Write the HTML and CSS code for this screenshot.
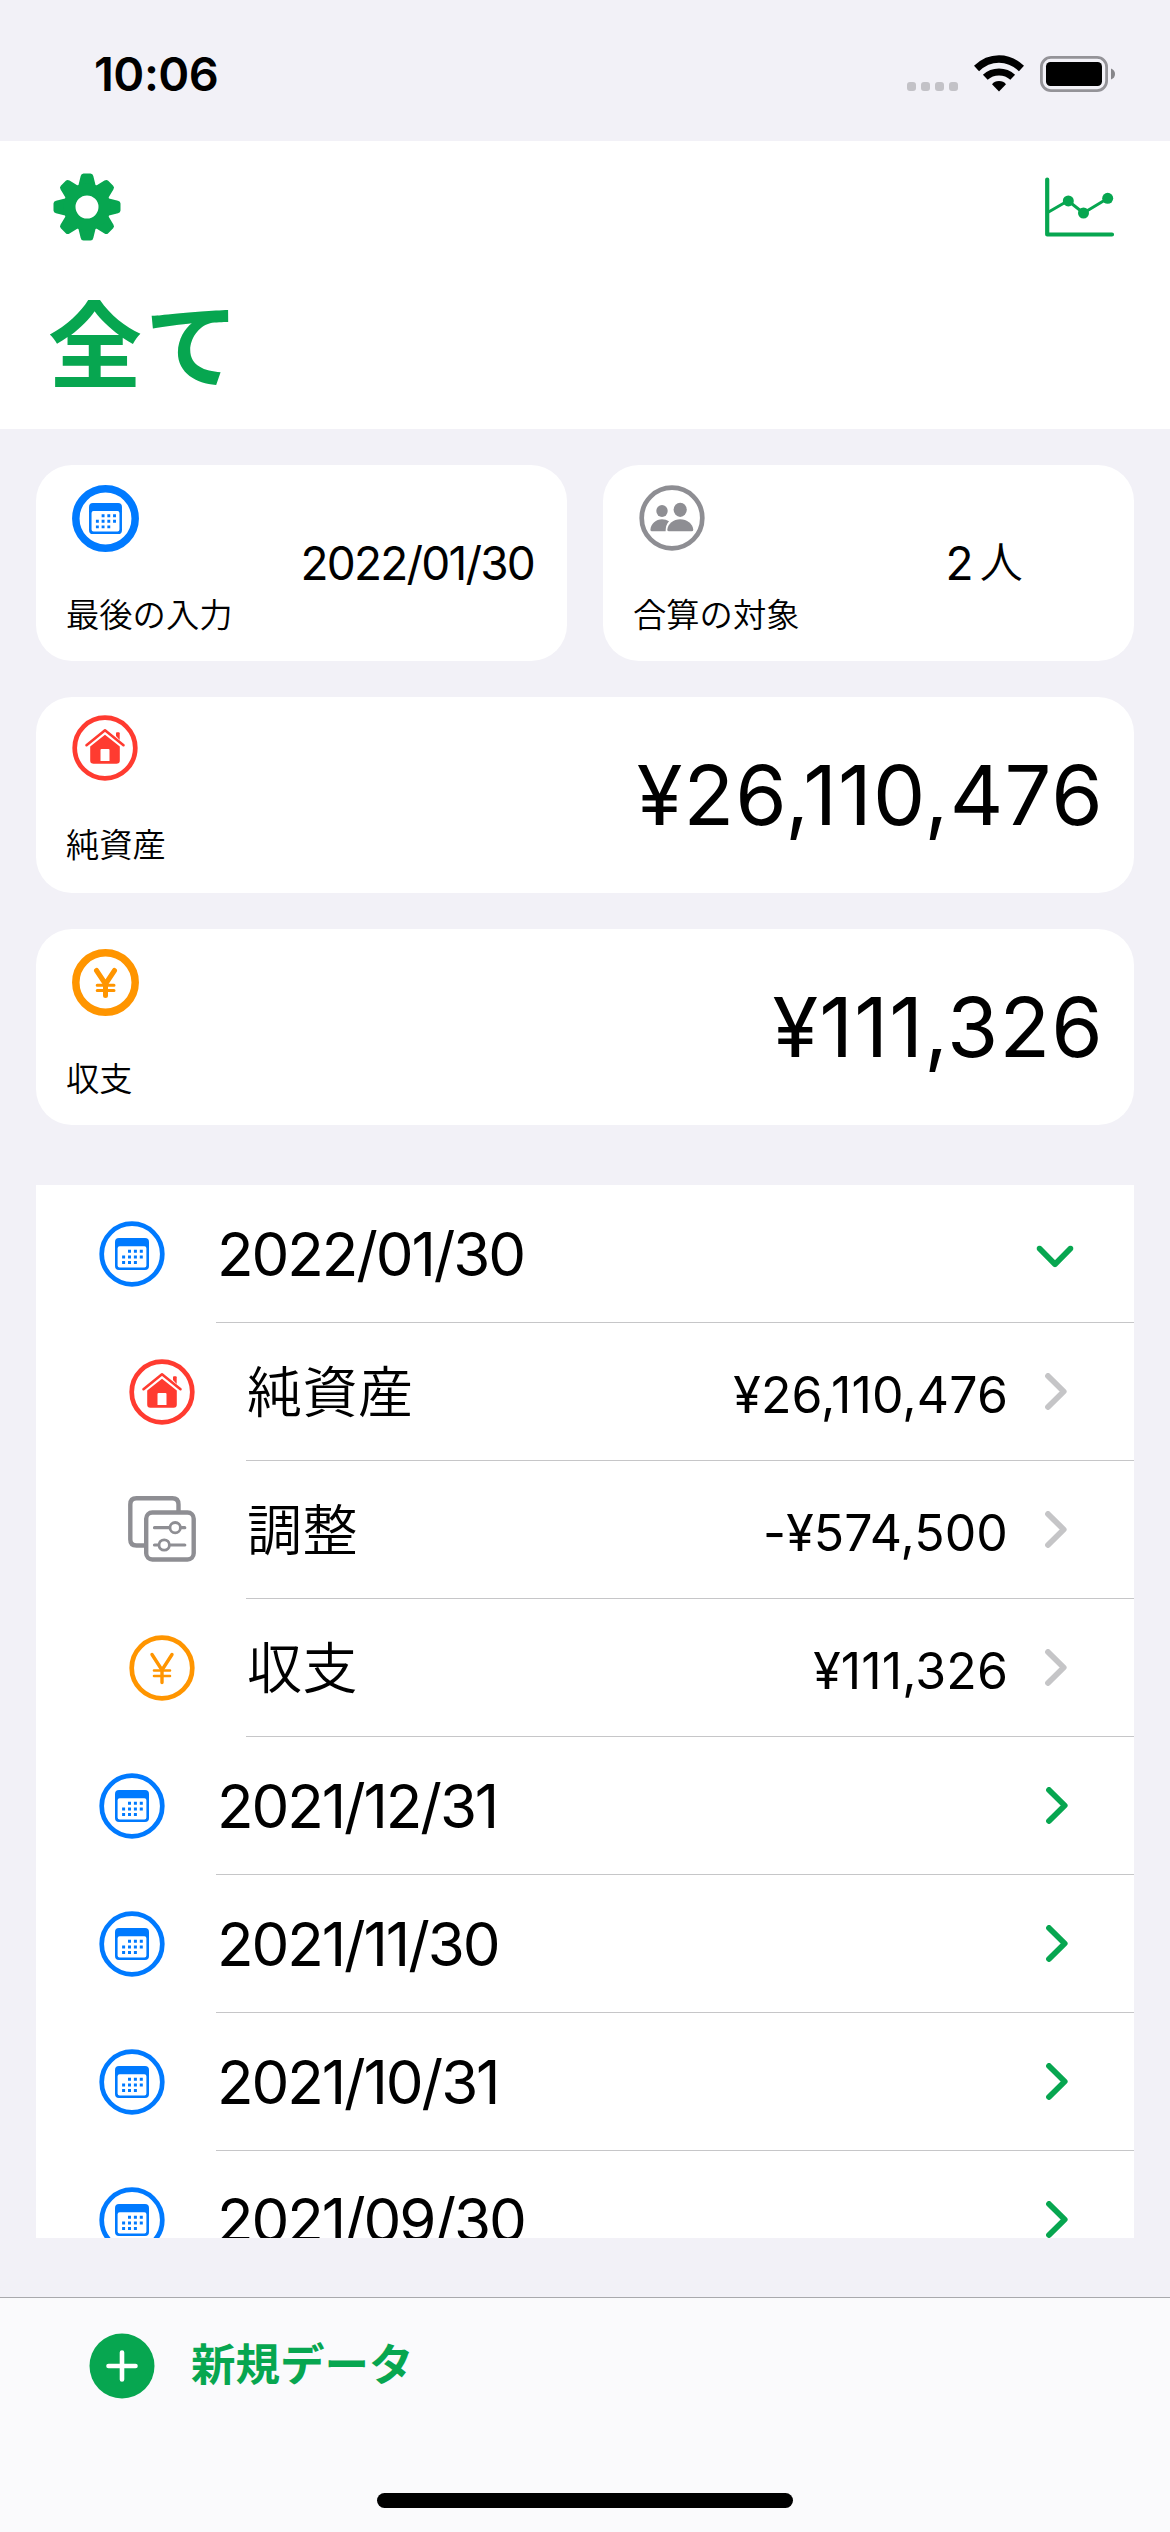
FILE: index.html
```html
<!DOCTYPE html>
<html lang="ja">
<head>
  <meta charset="utf-8">
  <meta name="viewport" content="width=device-width, initial-scale=1">
  <title>全て</title>
  <link rel="stylesheet" href="styles.css">
</head>

<body>
  <!-- shared icons -->
  <svg width="0" height="0" class="defs">
    <symbol id="calendar" viewBox="0 0 34 32">
      <path fill-rule="evenodd" fill="currentColor" d="M4 0H30A4 4 0 0 1 34 4V28A4 4 0 0 1 30 32H4A4 4 0 0 1 0 28V4A4 4 0 0 1 4 0ZM4.600 8.200A2 2 0 0 0 2.600 10.200V27.400A2 2 0 0 0 4.600 29.400H29.400A2 2 0 0 0 31.400 27.400V10.200A2 2 0 0 0 29.400 8.200Z"/>
      <path stroke="currentColor" stroke-width="3" stroke-dasharray="3 2.900" fill="none" d="M13 13.200H28M7.100 18.900H28M7.100 24.600H22.500"/>
    </symbol>
    <symbol id="calendar-thin" viewBox="0 0 66 66">
      <circle cx="33" cy="33" r="30.300" fill="none" stroke="currentColor" stroke-width="4.700"/>
      <use href="#calendar" x="16" y="17" width="34" height="32"/>
    </symbol>
    <symbol id="calendar-bold" viewBox="0 0 67 67">
      <circle cx="33.500" cy="33.500" r="29.700" fill="none" stroke="currentColor" stroke-width="7.500"/>
      <use href="#calendar" x="16.500" y="18" width="34" height="31"/>
    </symbol>
    <symbol id="house" viewBox="0 0 66 66">
      <circle cx="33" cy="33" r="30.300" fill="none" stroke="currentColor" stroke-width="4.700"/>
      <path fill="none" stroke="currentColor" stroke-width="2.600" stroke-linecap="round" stroke-linejoin="round" d="M14.500 30.200L33 15.300L51.500 30.200"/>
      <path fill="currentColor" d="M44 21V18.200Q44 17.300 45 17.300H46.700Q47.700 17.300 47.700 18.200V25Z"/>
      <path fill="currentColor" fill-rule="evenodd" d="M33 19.800L47.800 31.600V45.500Q47.800 48.700 44.600 48.700H21.400Q18.200 48.700 18.200 45.500V31.600ZM29.500 34Q28.500 34 28.500 35V46H37.500V35Q37.500 34 36.500 34Z"/>
    </symbol>
    <symbol id="yen-thin" viewBox="0 0 66 66">
      <circle cx="33" cy="33" r="30.300" fill="none" stroke="currentColor" stroke-width="4.700"/>
      <path fill="none" stroke="currentColor" stroke-width="3.400" stroke-linecap="round" stroke-linejoin="round" d="M23 19.500L33 35L43 19.500M33 35V47.500"/>
      <path fill="none" stroke="currentColor" stroke-width="2.600" stroke-linecap="round" d="M25 35.500H41M25 41H41"/>
    </symbol>
    <symbol id="yen-bold" viewBox="0 0 67 67">
      <circle cx="33.500" cy="33.500" r="29.700" fill="none" stroke="currentColor" stroke-width="7.500"/>
      <path fill="none" stroke="currentColor" stroke-width="5" stroke-linecap="round" stroke-linejoin="round" d="M24.500 21.500L33.500 35L42.500 21.500M33.500 35V46.500"/>
      <path fill="none" stroke="currentColor" stroke-width="3" stroke-linecap="round" d="M25.200 36.300H42M25.200 41.600H42"/>
    </symbol>
    <symbol id="people" viewBox="0 0 66 66">
      <circle cx="33" cy="33" r="30.300" fill="none" stroke="currentColor" stroke-width="4.700"/>
      <ellipse cx="23" cy="26" rx="5.700" ry="6" fill="currentColor"/>
      <ellipse cx="41.200" cy="24.800" rx="6.600" ry="7.100" fill="currentColor"/>
      <path fill="currentColor" d="M26.600 46.300H13Q11.400 46.300 11.400 44.700C12 38.500 17 34.300 23 34.300Q27 34.300 30 36.200Q26.600 39.800 26.600 46.300Z"/>
      <path fill="currentColor" d="M30 46.300Q28.300 46.300 28.300 44.700C28.900 38.500 34.500 34.300 41.200 34.300S53.700 38.500 54.300 44.700Q54.300 46.300 52.700 46.300Z"/>
    </symbol>
    <symbol id="adjust" viewBox="0 0 68 66">
      <g fill="none" stroke="currentColor">
        <path stroke-width="4.400" d="M50.500 15V8.500Q50.500 2.300 44.300 2.300H8.500Q2.300 2.300 2.300 8.500V43.500Q2.300 49.500 8.500 49.500H16"/>
        <rect x="18.200" y="16.500" width="47.500" height="47" rx="6.200" stroke-width="4.400"/>
        <path stroke-width="3.200" stroke-linecap="round" d="M26.500 31.700H41M53.500 31.700H56.800M26.500 49H30M42.500 49H56.800"/>
        <circle cx="47.200" cy="31.700" r="5.200" stroke-width="2.800"/>
        <circle cx="36.200" cy="49" r="5.200" stroke-width="2.800"/>
      </g>
    </symbol>
    <symbol id="chevron" viewBox="0 0 22 37">
      <path fill="none" stroke="currentColor" stroke-width="5.800" stroke-linecap="round" stroke-linejoin="round" d="M3 3L18.700 18.500L3 34"/>
    </symbol>
  </svg>

  <div class="status-bar">
    <div class="time">10:06</div>
    <div class="status-icons">
      <div class="dots"><i></i><i></i><i></i><i></i></div>
      <svg class="wifi" width="50" height="37" viewBox="0 0 50 37">
        <path d="M2.500 13.500Q12.500 4 25 4T47.500 13.500" fill="none" stroke="#000" stroke-width="7.400"/>
        <path d="M11.300 22.300Q17 17 25 17T38.700 22.300" fill="none" stroke="#000" stroke-width="7"/>
        <path d="M25 36.500L18 29.300Q20.500 26 25 26T32 29.300Z"/>
      </svg>
      <svg class="battery" width="75" height="36" viewBox="0 0 75 36">
        <rect x="1.400" y="1.400" width="65.200" height="33.200" rx="9.500" fill="none" stroke="#949398" stroke-width="2.800"/>
        <rect x="6" y="6" width="56" height="24" rx="4.500"/>
        <path d="M71 12.500Q75 14 75 18T71 23.500Z" fill="#87868a"/>
      </svg>
    </div>
  </div>

  <div class="header">
    <div class="nav">
      <svg width="68" height="68" viewBox="-34 -34 68 68">
        <g fill="#07a650">
          <path id="tooth" d="M-9 -20L-6.300 -31Q-5.800 -33.500 -3.500 -33.500H3.500Q5.800 -33.500 6.300 -31L9 -20Z"/>
          <use href="#tooth" transform="rotate(45)"/>
          <use href="#tooth" transform="rotate(90)"/>
          <use href="#tooth" transform="rotate(135)"/>
          <use href="#tooth" transform="rotate(180)"/>
          <use href="#tooth" transform="rotate(225)"/>
          <use href="#tooth" transform="rotate(270)"/>
          <use href="#tooth" transform="rotate(315)"/>
        </g>
        <circle r="17.500" fill="#fff" stroke="#07a650" stroke-width="12"/>
      </svg>
      <svg width="70" height="60" viewBox="0 0 70 60">
        <g stroke="#07a650" stroke-linecap="round" stroke-linejoin="round" fill="none">
          <path d="M2.200 2.500V57.500H67" stroke-width="4.200"/>
          <path d="M4 34.700L23 23.700L38.500 36L62.500 21.500" stroke-width="3"/>
        </g>
        <g fill="#07a650">
          <circle cx="23.300" cy="23.900" r="5.500"/>
          <circle cx="38.500" cy="36" r="5.500"/>
          <circle cx="62.700" cy="21.300" r="5.500"/>
        </g>
      </svg>
    </div>
    <h1>全て</h1>
  </div>

  <div class="cards">
    <div class="card half">
      <div class="card-info">
        <svg class="blue big"><use href="#calendar-bold"/></svg>
        <span>最後の入力</span>
      </div>
      <div class="card-value small">2022/01/30</div>
    </div>
    <div class="card half">
      <div class="card-info">
        <svg class="gray"><use href="#people"/></svg>
        <span>合算の対象</span>
      </div>
      <div class="card-value small count">2<span>人</span></div>
    </div>
    <div class="card">
      <div class="card-info raised">
        <svg class="red"><use href="#house"/></svg>
        <span>純資産</span>
      </div>
      <div class="card-value">¥26,110,476</div>
    </div>
    <div class="card">
      <div class="card-info">
        <svg class="orange big"><use href="#yen-bold"/></svg>
        <span>収支</span>
      </div>
      <div class="card-value">¥111,326</div>
    </div>
  </div>

  <div class="list">
    <div class="row">
      <svg class="icon blue"><use href="#calendar-thin"/></svg>
      <div class="row-body">
        <span class="date">2022/01/30</span>
        <svg class="chevron green down"><use href="#chevron"/></svg>
      </div>
    </div>
    <div class="row child">
      <svg class="icon red"><use href="#house"/></svg>
      <div class="row-body">
        <span class="name">純資産</span>
        <span class="amount">¥26,110,476</span>
        <svg class="chevron"><use href="#chevron"/></svg>
      </div>
    </div>
    <div class="row child">
      <svg class="icon gray adjust"><use href="#adjust"/></svg>
      <div class="row-body">
        <span class="name">調整</span>
        <span class="amount">-¥574,500</span>
        <svg class="chevron"><use href="#chevron"/></svg>
      </div>
    </div>
    <div class="row child">
      <svg class="icon orange"><use href="#yen-thin"/></svg>
      <div class="row-body">
        <span class="name">収支</span>
        <span class="amount">¥111,326</span>
        <svg class="chevron"><use href="#chevron"/></svg>
      </div>
    </div>
    <div class="row">
      <svg class="icon blue"><use href="#calendar-thin"/></svg>
      <div class="row-body">
        <span class="date">2021/12/31</span>
        <svg class="chevron green"><use href="#chevron"/></svg>
      </div>
    </div>
    <div class="row">
      <svg class="icon blue"><use href="#calendar-thin"/></svg>
      <div class="row-body">
        <span class="date">2021/11/30</span>
        <svg class="chevron green"><use href="#chevron"/></svg>
      </div>
    </div>
    <div class="row">
      <svg class="icon blue"><use href="#calendar-thin"/></svg>
      <div class="row-body">
        <span class="date">2021/10/31</span>
        <svg class="chevron green"><use href="#chevron"/></svg>
      </div>
    </div>
    <div class="row">
      <svg class="icon blue"><use href="#calendar-thin"/></svg>
      <div class="row-body">
        <span class="date">2021/09/30</span>
        <svg class="chevron green"><use href="#chevron"/></svg>
      </div>
    </div>
  </div>

  <div class="toolbar">
    <div class="add">
      <svg width="66" height="66" viewBox="0 0 66 66">
        <circle cx="33" cy="33" r="32.500" fill="#07a650"/>
        <path d="M33 19.500V46.500M19.500 33H46.500" stroke="#fff" stroke-width="4.600" stroke-linecap="round"/>
      </svg>
      <span>新規データ</span>
    </div>
    <div class="home-indicator"></div>
  </div>
</body>

</html>
```
FILE: styles.css
```css
* {
  box-sizing: border-box;
}

body {
  margin: 0;
  width: 1170px;
  height: 2532px;
  display: flex;
  flex-direction: column;
  overflow: hidden;
  background-color: #f2f1f7;
  color: #000;
  font-family: Inter, "Noto Sans CJK JP", sans-serif;
}

svg {
  display: block;
  flex: none;
}

.defs {
  position: absolute;
}

.blue {
  color: #007aff;
}

.red {
  color: #ff3b30;
}

.orange {
  color: #ff9500;
}

.gray {
  color: #8e8e93;
}

/* Status bar */
.status-bar {
  flex: none;
  height: 141px;
  padding: 0 55px 0 94px;
  display: flex;
  justify-content: space-between;
}

.time {
  padding-top: 44px;
  font-size: 47px;
  line-height: 60px;
  font-weight: 600;
  letter-spacing: -0.5px;
}

.status-icons {
  display: flex;
  align-items: flex-end;
  height: 92px;
}

.dots {
  display: flex;
  gap: 5px;
  margin: 0 16px 1px 0;
}

.dots i {
  width: 9px;
  height: 9px;
  border-radius: 3px;
  background: #c3c2c7;
}

.wifi {
  margin-right: 16px;
}

/* Header */
.header {
  flex: none;
  height: 288px;
  padding: 32px 55px 0 53px;
  background: #fff;
}

.nav {
  display: flex;
  justify-content: space-between;
  align-items: center;
  height: 68px;
}

h1 {
  margin: 46px 0 0 -5px;
  font-size: 94px;
  line-height: 120px;
  font-weight: 700;
  letter-spacing: 3px;
  color: #07a650;
}

/* Summary cards */
.cards {
  flex: none;
  display: grid;
  grid-template-columns: 1fr 1fr;
  gap: 36px;
  padding: 36px 36px 0;
}

.card {
  grid-column: span 2;
  display: flex;
  justify-content: space-between;
  height: 196px;
  padding: 0 30px;
  border-radius: 36px;
  background: #fff;
}

.card.half {
  grid-column: span 1;
}

.card-info {
  padding-top: 20px;
}

.card-info.raised {
  padding-top: 18px;
}

.card-info svg {
  width: 66px;
  height: 66px;
  margin: 0 0 43px 6px;
}

.card-info svg.big {
  width: 67px;
  height: 67px;
  margin-bottom: 42px;
}

.card-info span {
  display: block;
  font-size: 33.3px;
  line-height: 42px;
  font-weight: 350;
}

.card-value {
  align-self: center;
  font-size: 83px;
  line-height: 100px;
  letter-spacing: 1.2px;
}

.card-value.small {
  padding-right: 3px;
  font-size: 46px;
  line-height: 60px;
  letter-spacing: -1.8px;
}

.count {
  margin-right: 80px;
}

.count span {
  position: relative;
  top: -2px;
  margin-left: 8px;
  font-size: 43px;
  font-weight: 350;
}

/* Date list */
.list {
  flex: none;
  height: 1053px;
  margin: 60px 36px 0;
  overflow: hidden;
  background: #fff;
}

.row {
  display: flex;
  align-items: center;
  height: 138px;
  padding-left: 63px;
}

.row.child {
  padding-left: 93px;
}

.icon {
  width: 66px;
  height: 66px;
  margin-right: 51px;
}

.icon.adjust {
  width: 68px;
  margin: -3px 50px 0 -1px;
}

.row-body {
  flex: 1;
  display: flex;
  align-items: center;
  height: 138px;
  padding: 0 67px 0 1px;
  border-bottom: 1px solid #c6c6c8;
}

.date {
  font-size: 60px;
  line-height: 80px;
  letter-spacing: -2.1px;
}

.name {
  font-size: 55px;
  line-height: 80px;
  font-weight: 350;
  letter-spacing: 0.5px;
}

.amount {
  margin: 6px 37px 0 auto;
  font-size: 50px;
  line-height: 60px;
  letter-spacing: 0.1px;
}

.chevron {
  width: 22px;
  height: 37px;
  color: #c5c5c7;
}

.chevron.green {
  margin: 0 -1px 0 auto;
  color: #07a650;
}

.chevron.down {
  margin-right: 1px;
  transform: translateY(3px) rotate(90deg);
}

/* Toolbar */
.toolbar {
  margin-top: 59px;
  height: 235px;
  border-top: 1px solid #a9a9ad;
  background: #fafafc;
}

.add {
  display: flex;
  align-items: center;
  height: 66px;
  margin: 35px 0 0 89px;
  font-size: 44.5px;
  line-height: 60px;
  font-weight: 700;
  color: #07a650;
}

.add span {
  margin: -3px 0 0 36px;
}

.home-indicator {
  width: 416px;
  height: 15px;
  margin: 94px auto 0;
  border-radius: 8px;
  background: #000;
}
```
